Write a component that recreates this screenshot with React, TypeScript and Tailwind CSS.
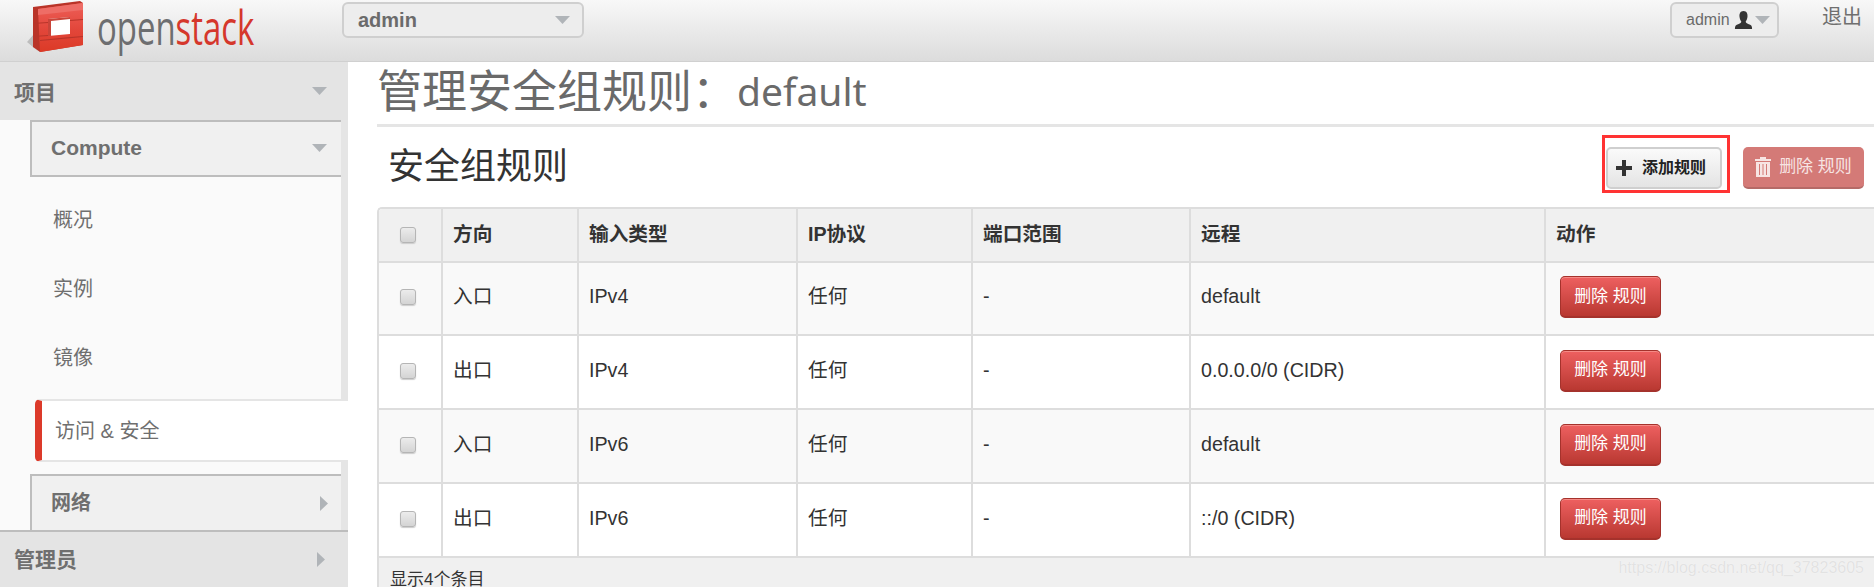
const sans = '"Liberation Sans","Noto Sans CJK SC",sans-serif';

function Caret({ dir = 'down', className = '' }: { dir?: 'down' | 'right'; className?: string }) {
  return dir === 'down' ? (
    <svg width="15" height="8" viewBox="0 0 15 8" className={className}>
      <path d="M0 0H15L7.5 8Z" fill="#b0b4b8" />
    </svg>
  ) : (
    <svg width="8" height="15" viewBox="0 0 8 15" className={className}>
      <path d="M0 0L8 7.5L0 15Z" fill="#b0b4b8" />
    </svg>
  );
}

function Logo() {
  return (
    <svg width="58" height="52" viewBox="0 0 58 52" className="shrink-0">
      <defs>
        <linearGradient id="lg" x1="0" y1="0" x2="0" y2="1">
          <stop offset="0" stopColor="#ee5f58" />
          <stop offset="0.55" stopColor="#e2463a" />
          <stop offset="1" stopColor="#dc3a26" />
        </linearGradient>
      </defs>
      <path d="M0 41L7 33V47L12 51Z" fill="#bdbdbd" />
      <path d="M6 6L53 0L56 2V44L13 51L6 46Z" fill="#b93428" />
      <path d="M11 8L56 2V44L13 51Z" fill="url(#lg)" />
      <path d="M11 8L56 2V9L11 14Z" fill="#ee6d66" />
      <path d="M21 18L43 16V33L21 35Z" fill="#ffffff" />
      <path d="M21 18L43 16V18L24 20V35H21Z" fill="#c9453a" />
      <path d="M6 22L21 21V22L6 23ZM43 19L56 18V19L43 20ZM13 39L43 36L56 35V36L13 40ZM6 35L21 34V35L6 36Z" fill="#b8342a" />
    </svg>
  );
}

function Checkbox() {
  return <span className="block h-[16px] w-[16px] rounded-[3px] border border-[#b5b5b5] bg-gradient-to-b from-[#ececec] to-[#d4d4d4] shadow-[0_1px_1px_#ccc]" />;
}

function RedButton() {
  return (
    <button className="flex h-[42px] w-[101px] items-center justify-center rounded-[5px] border border-b-2 border-[#a5322c] bg-gradient-to-b from-[#ee6060] to-[#b93831] text-[17px] text-white shadow-[inset_0_1px_0_#f58a86]">
      删除 规则
    </button>
  );
}

const rows = [
  ['入口', 'IPv4', '任何', '-', 'default'],
  ['出口', 'IPv4', '任何', '-', '0.0.0.0/0 (CIDR)'],
  ['入口', 'IPv6', '任何', '-', 'default'],
  ['出口', 'IPv6', '任何', '-', '::/0 (CIDR)'],
];
const headers = ['方向', '输入类型', 'IP协议', '端口范围', '远程', '动作'];

function SubItem({ label, active }: { label: string; active?: boolean }) {
  if (active) {
    return (
      <div className="ml-[35px] mt-[7px] flex h-[63px] items-center rounded-l-[5px] border-y-2 border-l-[7px] border-y-[#e5e5e5] border-l-[#dc3a2a] bg-white pl-[13px] text-[20px] text-[#6f6f6f]">
        {label}
      </div>
    );
  }
  return <div className="flex h-[69px] items-center pl-[53px] text-[20px] text-[#6f6f6f]">{label}</div>;
}

export default function App() {
  return (
    <div className="flex h-[587px] w-[1874px] flex-col overflow-hidden bg-white" style={{ fontFamily: sans }}>
      <header className="flex h-[62px] shrink-0 items-start border-b border-[#d0d0d0] bg-gradient-to-b from-[#f8f8f8] to-[#dcdcdc]">
        <div className="ml-[27px] mt-[1px] flex w-[315px] items-start">
          <Logo />
          <div className="ml-[12px] origin-left scale-x-[0.7] whitespace-nowrap text-[47px] font-medium leading-[52px] text-[#6d6e70]" style={{ fontFamily: '"Open Sans",sans-serif' }}>
            open<span className="text-[#d5372c]">stack</span>
          </div>
        </div>
        <div className="mt-[2px] flex h-[36px] w-[242px] items-center justify-between rounded-[6px] border-2 border-[#cfcfcf] bg-[#ededed] pl-[14px] pr-[12px]">
          <span className="text-[20px] font-bold text-[#6b6b6b]">admin</span>
          <Caret />
        </div>
        <div className="ml-auto mt-[2px] flex h-[36px] w-[109px] items-center rounded-[6px] border-2 border-[#cfcfcf] bg-[#ededed] pl-[14px]">
          <span className="text-[16px] text-[#6b6b6b]">admin</span>
          <svg width="19" height="19" viewBox="0 0 20 20" className="ml-[4px]">
            <path d="M10 0C6.5 0 5.5 3 5.8 6C6 8.5 7 10 7.7 11C7.7 12.5 6 13 3 14.500C1 15.500 1 17.500 1 19H19C19 17.500 19 15.500 17 14.500C14 13 12.300 12.500 12.300 11C13 10 14 8.500 14.200 6C14.500 3 13.500 0 10 0Z" fill="#333" />
          </svg>
          <Caret className="ml-[2px]" />
        </div>
        <div className="ml-[43px] mr-[12px] mt-[5px] text-[20px] leading-[24px] text-[#6f6f6f]">退出</div>
      </header>

      <div className="flex min-h-0 flex-1">
        <aside className="flex w-[348px] shrink-0 flex-col bg-[#fafafa]">
          <div className="flex h-[58px] shrink-0 items-center justify-between bg-[#e4e4e4] pl-[14px] pr-[21px] text-[21px] font-bold text-[#6f6f6f]">
            <span className="pt-[3px]">项目</span>
            <Caret />
          </div>
          <div className="relative min-h-0 flex-1">
            <div className="absolute bottom-0 right-0 top-0 w-[7px] bg-[#e5e5e5]" />
            <div className="relative">
              <div className="ml-[30px] mr-[7px] flex h-[57px] items-center justify-between border-2 border-r-0 border-[#bdbdbd] bg-[#f0f0f0] pb-[1px] pl-[19px] pr-[14px] text-[21px] font-bold text-[#6f6f6f]">
                Compute
                <Caret />
              </div>
              <div className="h-[8px]" />
              <SubItem label="概况" />
              <SubItem label="实例" />
              <SubItem label="镜像" />
              <SubItem label="访问 & 安全" active />
              <div className="h-[12px]" />
              <div className="ml-[30px] mr-[7px] flex h-[56px] items-center justify-between border-l-2 border-t-2 border-[#bdbdbd] bg-[#f0f0f0] pl-[19px] pr-[13px] text-[20px] font-bold text-[#6f6f6f]">
                网络
                <Caret dir="right" />
              </div>
            </div>
          </div>
          <div className="flex h-[57px] shrink-0 items-center justify-between border-t-2 border-[#bdbdbd] bg-[#e4e4e4] pl-[14px] pr-[23px] text-[21px] font-bold text-[#6f6f6f]">
            管理员
            <Caret dir="right" />
          </div>
        </aside>

        <main className="min-w-0 flex-1 overflow-hidden pl-[29px]">
          <h1 className="flex h-[65px] items-center whitespace-nowrap border-b-[3px] border-[#e5e5e5] text-[45px] leading-[52px] text-[#6a6a6a]">
            管理安全组规则：
            <span style={{ fontFamily: '"Noto Sans",sans-serif' }} className="pb-[4px] text-[39px]">default</span>
          </h1>
          <div className="flex h-[80px] items-start justify-between pl-[11px] pr-[10px]">
            <h2 className="mt-[16px] text-[36px] leading-[48px] text-[#333]">安全组规则</h2>
            <div className="flex items-start">
              <div className="mt-[8px] h-[58px] w-[128px] border-[3px] border-[#ff3333] pl-[1px] pt-[9px]">
                <button className="flex h-[42px] w-[116px] items-center gap-[10px] rounded-[5px] border-2 border-[#cfcfcf] bg-gradient-to-b from-[#fafafa] to-[#e4e4e4] pl-[8px] text-[16px] font-bold text-[#222]">
                  <svg width="16" height="16" viewBox="0 0 16 16"><path d="M6 0H10V6H16V10H10V16H6V10H0V6H6Z" fill="#333" /></svg>
                  添加规则
                </button>
              </div>
              <button className="ml-[13px] mt-[20px] flex h-[42px] w-[121px] items-center justify-center gap-[8px] rounded-[5px] border-b-2 border-[#b56a67] bg-[#d47a77] text-[17px] text-[#f7e4e3]">
                <svg width="16" height="20" viewBox="0 0 16 20">
                  <path d="M5 0H11V2H16V4H0V2H5ZM1 5H15V20H1ZM4 7V18H5V7ZM7.500 7V18H8.500V7ZM11 7V18H12V7Z" fill="#f7e4e3" fillRule="evenodd" />
                </svg>
                删除 规则
              </button>
            </div>
          </div>

          <div className="w-[1500px] overflow-hidden rounded-tl-[5px] border-l-2 border-t-2 border-[#dddddd]">
            <table className="w-full table-fixed border-collapse text-[19.7px] text-[#333]">
              <colgroup>
                <col className="w-[63px]" />
                <col className="w-[136px]" />
                <col className="w-[219px]" />
                <col className="w-[175px]" />
                <col className="w-[218px]" />
                <col className="w-[355px]" />
                <col />
              </colgroup>
              <thead>
                <tr className="h-[53px] bg-[#f0f0f0]">
                  <th className="border-b-2 border-r-2 border-[#dddddd] pr-[5px]">
                    <div className="flex justify-center"><Checkbox /></div>
                  </th>
                  {headers.map((h) => (
                    <th key={h} className="border-b-2 border-r-2 border-[#dddddd] pl-[10px] text-left font-bold">{h}</th>
                  ))}
                </tr>
              </thead>
              <tbody>
                {rows.map((r, i) => (
                  <tr key={i} className={(i === 0 ? 'h-[73px] ' : 'h-[74px] ') + (i % 2 === 0 ? 'bg-[#f9f9f9]' : 'bg-white')}>
                    <td className="border-b-2 border-r-2 border-[#dddddd] pb-[3px] pr-[5px]">
                      <div className="flex justify-center"><Checkbox /></div>
                    </td>
                    {r.map((c, j) => (
                      <td key={j} className="border-b-2 border-r-2 border-[#dddddd] pb-[3px] pl-[10px]">{c}</td>
                    ))}
                    <td className="border-b-2 border-r-2 border-[#dddddd] pb-[3px] pl-[14px]"><RedButton /></td>
                  </tr>
                ))}
              </tbody>
            </table>
            <div className="flex h-[40px] items-start justify-between bg-[#f0f0f0] pl-[11px] pr-[13px] text-[17px] leading-[20px] text-[#333]">
              <span className="mt-[12px]">显示4个条目</span>
              <span className="text-[16px] text-[#e2e2e2] [text-shadow:0_0_1px_#fff]">https://blog.csdn.net/qq_37823605</span>
            </div>
          </div>
        </main>
      </div>
    </div>
  );
}
